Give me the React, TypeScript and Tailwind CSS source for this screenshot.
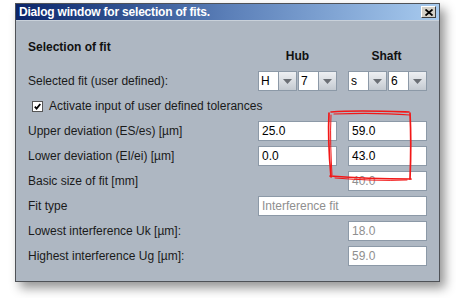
import React from "react";

const FONT = { fontFamily: '"Liberation Sans", Arial, sans-serif' };

function Field({ value, disabled, wide }: { value: string; disabled?: boolean; wide?: boolean }) {
  return (
    <div
      className={`h-[20px] ${wide ? "w-[169px]" : "w-[79px]"} border border-[#8c99a7] bg-white px-[3px] text-[12px] leading-[18px] ${disabled ? "text-[#8f8f8f]" : "text-black"}`}
    >
      {value}
    </div>
  );
}

function Combo({ value }: { value: string }) {
  return (
    <div className="flex h-[20px] w-[39px] border border-[#8c99a7]">
      <div className="w-[20px] bg-white pl-[2px] text-[12px] leading-[18px] text-black">{value}</div>
      <div className="flex w-[18px] items-center justify-center border-l border-[#8c99a7] bg-gradient-to-b from-[#eef0f3] to-[#c4cad1]">
        <svg width="9" height="5" viewBox="0 0 9 5">
          <path d="M0 0 L9 0 L4.5 5 Z" fill="#6b6f75" />
        </svg>
      </div>
    </div>
  );
}

function Row({ label, children }: { label: string; children: React.ReactNode }) {
  return (
    <div className="flex h-[20px] items-center">
      <div className="w-[230px] text-[12px] leading-[20px] text-[#1a1a1a]">{label}</div>
      {children}
    </div>
  );
}

export default function App() {
  return (
    <div className="relative h-[298px] w-[456px] overflow-hidden bg-white pl-[15px] pt-[3px]" style={FONT}>
      <div className="relative flex h-[279px] w-[425px] flex-col border border-[#4f5257] bg-[#aeb7c2] shadow-[5px_6px_10px_rgba(0,0,0,0.42)]">
        {/* title bar */}
        <div className="flex h-[17px] items-center justify-between border-b border-[#c9d1da] bg-gradient-to-r from-[#0a246a] via-[#5b7fb8] to-[#a8cbef] pl-[3px] pr-[3px]">
          <span className="text-[12px] font-bold leading-[16px] tracking-[-0.2px] text-white">Dialog window for selection of fits.</span>
          <div className="flex h-[12px] w-[15px] items-center justify-center border border-t-white border-l-white border-r-[#404040] border-b-[#404040] bg-[#d4d0c8]">
            <svg width="8" height="7" viewBox="0 0 8 7">
              <path d="M0.5 0.5 L7.5 6.5 M7.5 0.5 L0.5 6.5" stroke="#000" strokeWidth="1.8" />
            </svg>
          </div>
        </div>

        {/* body */}
        <div className="flex flex-col pl-[12px] pt-[19px]">
          <div className="flex h-[23px]">
            <div className="w-[230px] self-start text-[12px] font-bold leading-[14px] text-[#111]">Selection of fit</div>
            <div className="w-[79px] self-end text-center text-[12px] font-bold leading-[14px] text-[#111]">Hub</div>
            <div className="w-[10px]" />
            <div className="w-[79px] self-end text-center text-[12px] font-bold leading-[14px] text-[#111]">Shaft</div>
          </div>

          <div className="mt-[8px] flex flex-col gap-[5px]">
            <Row label="Selected fit (user defined):">
              <div className="flex w-[79px] justify-between">
                <Combo value="H" />
                <Combo value="7" />
              </div>
              <div className="w-[11px]" />
              <div className="flex w-[79px] justify-between">
                <Combo value="s" />
                <Combo value="6" />
              </div>
            </Row>

            <div className="flex h-[20px] items-center pl-[4px]">
              <div className="flex h-[11px] w-[11px] items-center justify-center border border-[#555] bg-white">
                <svg width="7" height="7" viewBox="0 0 7 7">
                  <path d="M0.8 3.6 L2.6 5.6 L6.3 1" stroke="#000" strokeWidth="1.8" fill="none" />
                </svg>
              </div>
              <span className="ml-[6px] text-[12px] leading-[20px] text-[#1a1a1a]">Activate input of user defined tolerances</span>
            </div>

            <Row label="Upper deviation (ES/es) [µm]">
              <Field value="25.0" />
              <div className="w-[11px]" />
              <Field value="59.0" />
            </Row>
            <Row label="Lower deviation (EI/ei) [µm]">
              <Field value="0.0" />
              <div className="w-[11px]" />
              <Field value="43.0" />
            </Row>
            <Row label="Basic size of fit [mm]">
              <div className="w-[90px]" />
              <Field value="40.0" disabled />
            </Row>
            <Row label="Fit type">
              <Field value="Interference fit" disabled wide />
            </Row>
            <Row label="Lowest interference Uk [µm]:">
              <div className="w-[90px]" />
              <Field value="18.0" disabled />
            </Row>
            <Row label="Highest interference Ug [µm]:">
              <div className="w-[90px]" />
              <Field value="59.0" disabled />
            </Row>
          </div>
        </div>

        {/* hand-drawn highlight */}
        <svg className="absolute left-[309px] top-[103px]" width="92" height="76" viewBox="0 0 92 76" fill="none">
          <path d="M6 5 C30 3 55 4 84 5" stroke="#f21818" strokeWidth="1.7" strokeLinecap="round" />
          <path d="M9 7 C35 6 60 6 85 8" stroke="#f21818" strokeWidth="1.2" strokeLinecap="round" />
          <path d="M4 6 C3 25 4 48 6 70" stroke="#f21818" strokeWidth="1.7" strokeLinecap="round" />
          <path d="M6 8 C5 28 6 50 7 68" stroke="#f21818" strokeWidth="1" strokeLinecap="round" />
          <path d="M85 6 C86 25 86 48 85 72" stroke="#f21818" strokeWidth="1.7" strokeLinecap="round" />
          <path d="M5 69 C30 71 55 72 86 72" stroke="#f21818" strokeWidth="1.7" strokeLinecap="round" />
          <path d="M10 71 C35 73 60 74 82 73" stroke="#f21818" strokeWidth="1" strokeLinecap="round" />
        </svg>
      </div>
    </div>
  );
}
